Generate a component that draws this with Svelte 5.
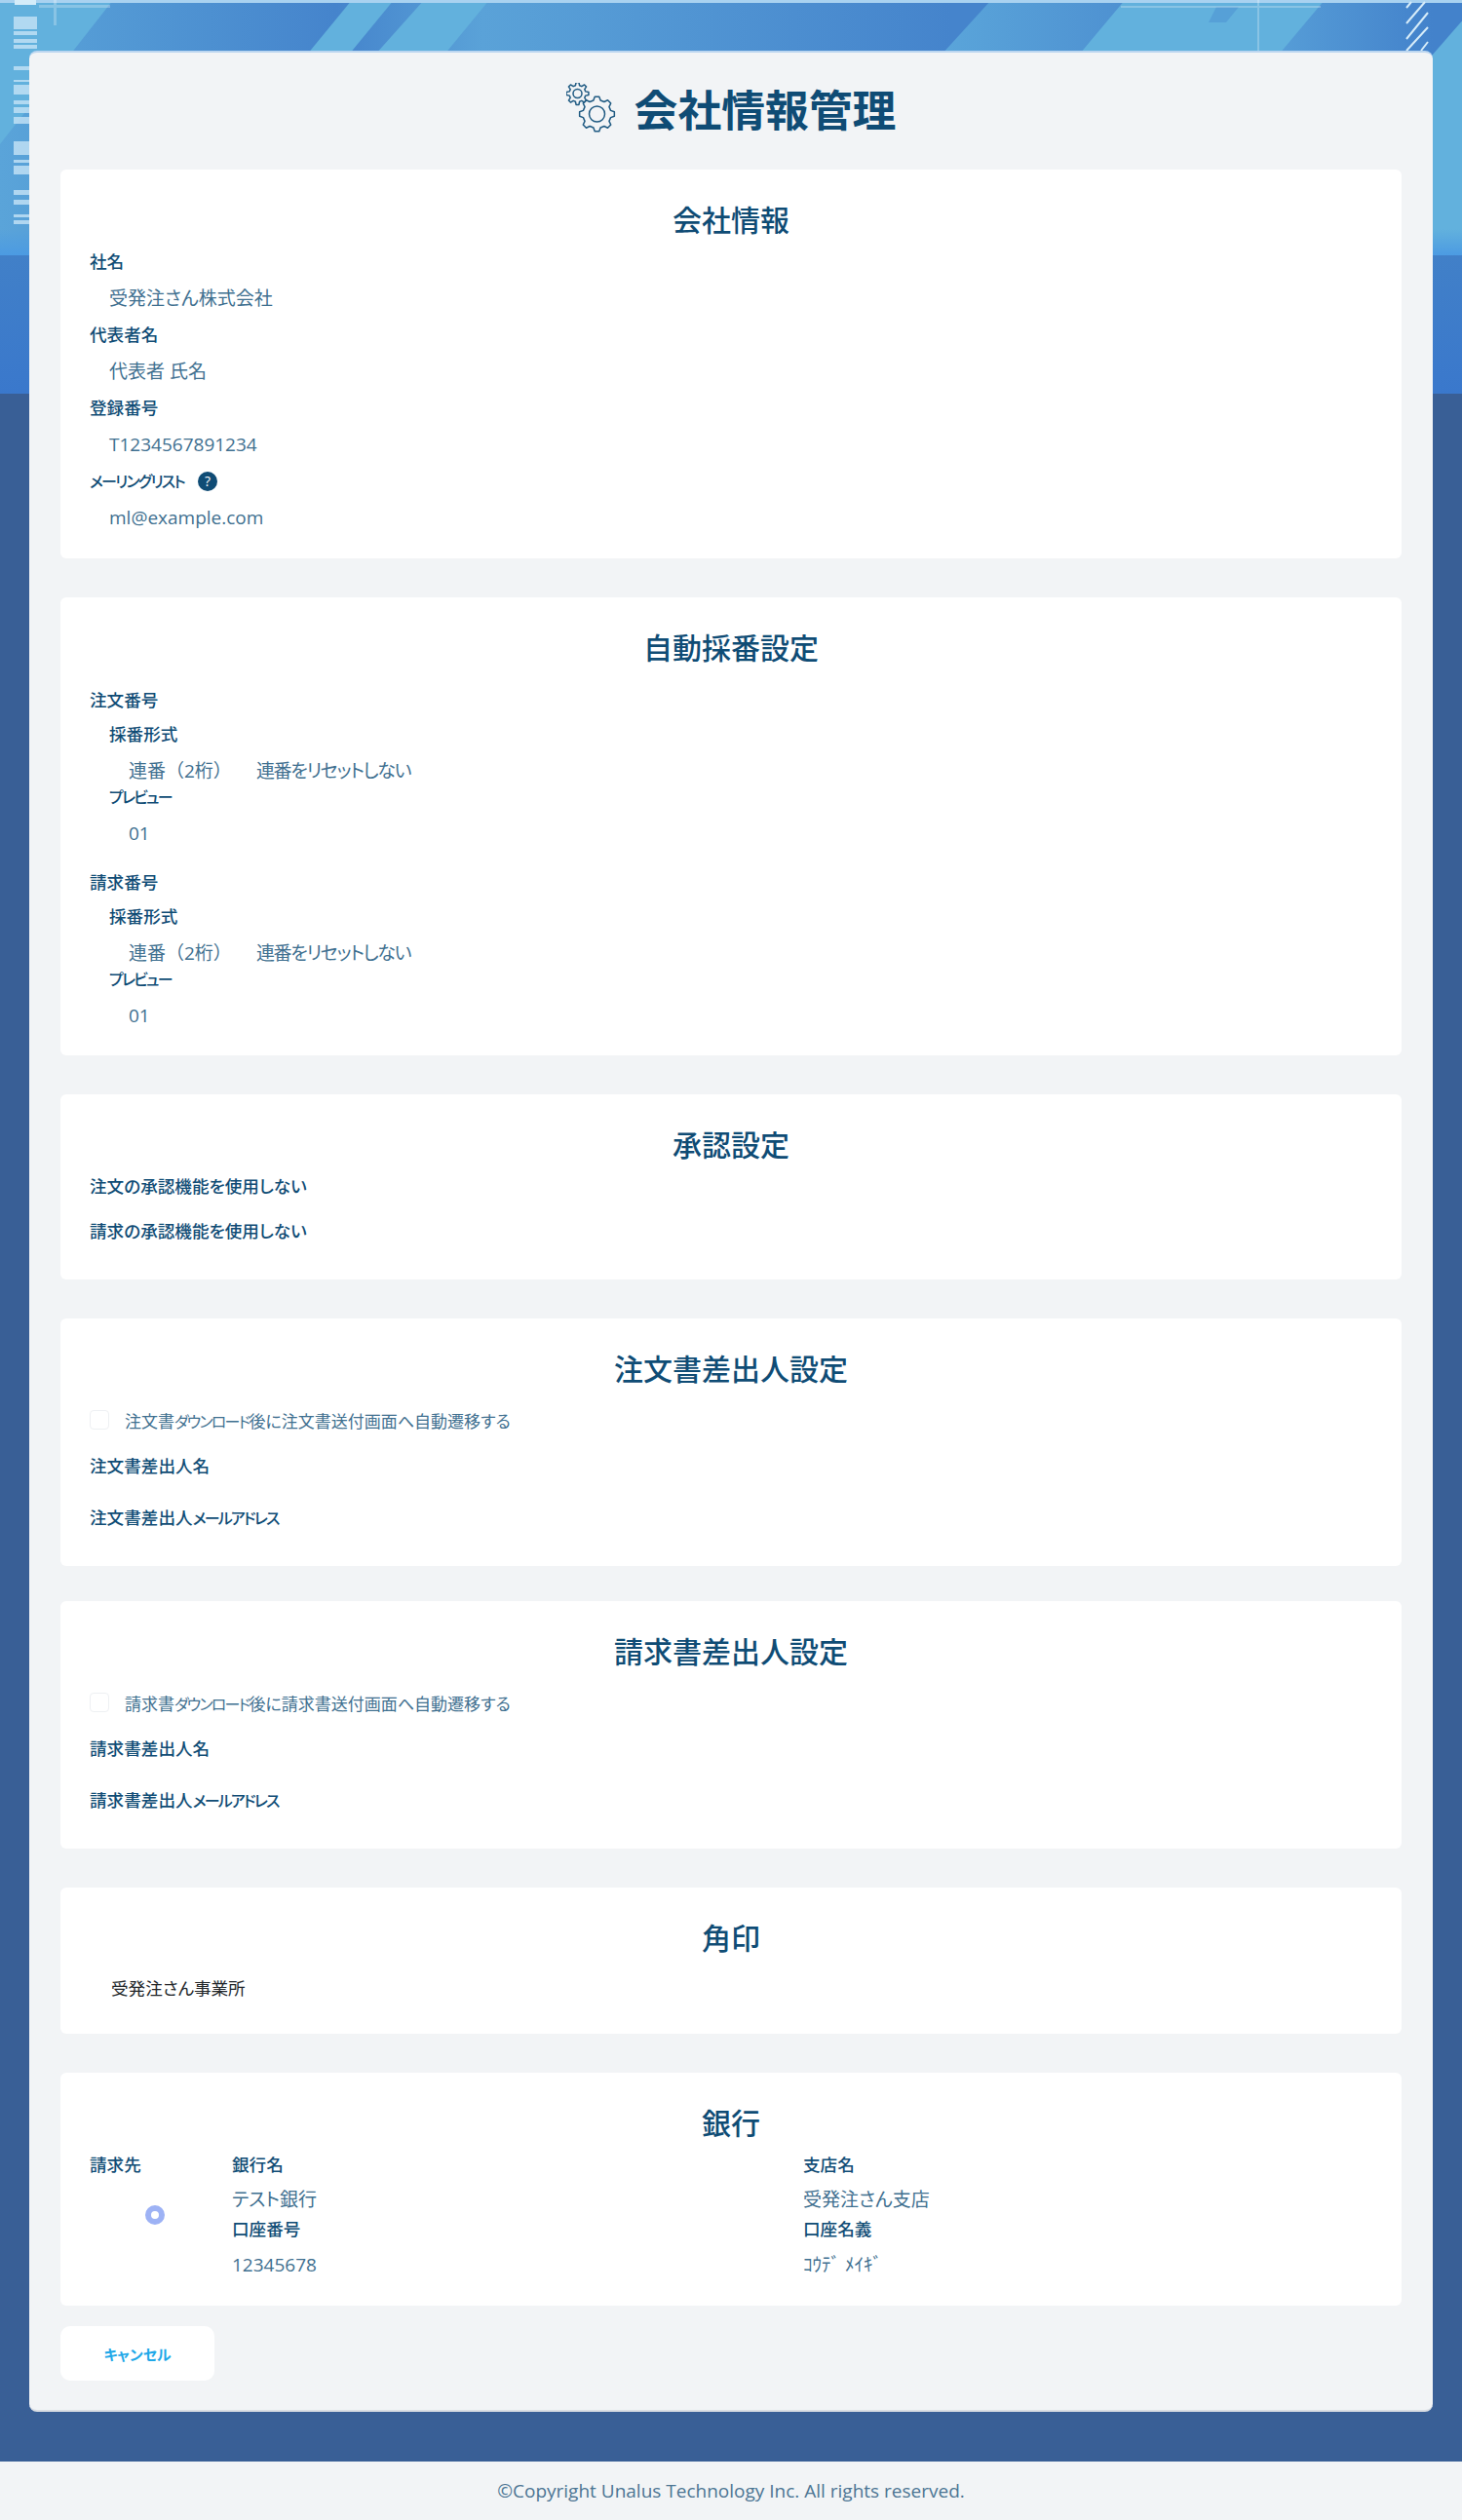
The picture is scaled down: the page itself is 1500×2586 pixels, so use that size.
<script>
	const gear = (cx, cy, outer, inner, teeth) => {
		const pts = [];
		const step = (Math.PI * 2) / teeth;
		for (let i = 0; i < teeth; i++) {
			const a = i * step;
			const corners = [
				[inner, a - step * 0.32],
				[outer, a - step * 0.16],
				[outer, a + step * 0.16],
				[inner, a + step * 0.32]
			];
			for (const [r, t] of corners) {
				pts.push(`${(cx + r * Math.cos(t)).toFixed(2)} ${(cy + r * Math.sin(t)).toFixed(2)}`);
			}
		}
		return 'M' + pts.join('L') + 'Z';
	};

	// the katakana runs sit smaller and tighter than the kanji around them
	const runs = (text) => text.split(/([ァ-ヶー]+)/).filter(Boolean);
	const isKana = (part) => /^[ァ-ヶー]/.test(part);

	const senders = [
		{ title: '注文書差出人設定', check: '注文書ダウンロード後に注文書送付画面へ自動遷移する', name: '注文書差出人名', mail: '注文書差出人メールアドレス' },
		{ title: '請求書差出人設定', check: '請求書ダウンロード後に請求書送付画面へ自動遷移する', name: '請求書差出人名', mail: '請求書差出人メールアドレス' }
	];
	const numbering = ['注文番号', '請求番号'];
	const leftBlocks = [
		[17, 13], [32, 4], [40, 4], [46, 4], [68, 4], [82, 2], [87, 10], [103, 4], [110, 6], [120, 7],
		[145, 14], [164, 3], [170, 9], [195, 5], [205, 5], [220, 3], [226, 4]
	];
</script>

{#snippet tight(text)}
	{#each runs(text) as part}{#if isKana(part)}<span class="kana">{part}</span>{:else}{part}{/if}{/each}
{/snippet}

<div class="page">
	<svg class="bg" viewBox="0 0 1500 262" width="1500" height="262" aria-hidden="true">
		<defs>
			<linearGradient id="base" x1="0" x2="1" y1="0" y2="0">
				<stop offset="0" stop-color="#5aa4d9" />
				<stop offset="0.23" stop-color="#4584cc" />
				<stop offset="0.33" stop-color="#5aa2d8" />
				<stop offset="0.65" stop-color="#4584cc" />
				<stop offset="0.86" stop-color="#4584cc" />
				<stop offset="0.875" stop-color="#569dd7" />
				<stop offset="0.98" stop-color="#4382cb" />
			</linearGradient>
			<linearGradient id="mid" x1="0" x2="1" y1="0" y2="0">
				<stop offset="0" stop-color="#5aa5da" />
				<stop offset="1" stop-color="#4e91d1" />
			</linearGradient>
			<linearGradient id="fade" x1="0" x2="0" y1="0" y2="1">
				<stop offset="0" stop-color="#4c9be2" stop-opacity="0" />
				<stop offset="1" stop-color="#4c9be2" />
			</linearGradient>
		</defs>
		<rect width="1500" height="262" fill="url(#base)" />
		<path d="M0 0H116L0 148Z" fill="#62b1dd" />
		<path d="M361 0H404L358 56H315Z" fill="#62b1dd" />
		<path d="M435 0H502L456 56H385Z" fill="#62b1dd" />
		<path d="M1017 0H1154L1107 56H966Z" fill="url(#mid)" />
		<path d="M1154 0H1359L1312 56H1107Z" fill="#62b1dd" />
		<path d="M1248 7H1271L1258 23H1240Z" fill="#4f94d3" opacity="0.6" />
		<path d="M1510 10L1290 262H1500Z" fill="#62b1dd" />
		<rect y="235" width="1500" height="27" fill="url(#fade)" />
		<rect width="1500" height="3" fill="#a9d2f0" />
		{#each leftBlocks as [y, h]}
			<rect x="14" {y} width="24" height={h} fill="#c6e4f6" opacity="0.8" />
		{/each}
		<rect x="15" y="0" width="22" height="5" fill="#d4ecf9" />
		<g fill="#ffffff" opacity="0.25">
			<rect x="55" y="0" width="3" height="26" />
			<rect x="40" y="5" width="73" height="3" />
			<rect x="1290" y="0" width="2" height="52" />
			<rect x="1150" y="6" width="205" height="2" />
		</g>
		<g stroke="#d6ecf9" stroke-width="2">
			<path d="M1443 8L1448 2M1443 24L1462 2M1443 40L1465 13M1443 52L1465 28M1458 52L1465 43" />
		</g>
	</svg>

	<main class="panel">
		<h1 class="page-title">
			<svg class="gears" viewBox="0 0 56 56" width="56" height="56" aria-hidden="true">
				<path d={gear(11.5, 11, 11.5, 8.5, 8)} />
				<circle cx="11.5" cy="11" r="4.5" />
				<path d={gear(31.5, 32, 18, 14.5, 8)} />
				<circle cx="31.5" cy="32" r="8" />
			</svg>
			<span>会社情報管理</span>
		</h1>

		<section class="card company">
			<h2>会社情報</h2>
			<div class="label">社名</div>
			<div class="value">受発注さん株式会社</div>
			<div class="label">代表者名</div>
			<div class="value">代表者 氏名</div>
			<div class="label">登録番号</div>
			<div class="value">T1234567891234</div>
			<div class="label">{@render tight('メーリングリスト')}<span class="help">?</span></div>
			<div class="value">ml@example.com</div>
		</section>

		<section class="card numbering">
			<h2>自動採番設定</h2>
			{#each numbering as name}
				<div class="group">
					<div class="label">{name}</div>
					<div class="label sub">採番形式</div>
					<div class="value deep format"><span class="full">連番（2桁）</span><span class="reset">連番をリセットしない</span></div>
					<div class="label sub preview">{@render tight('プレビュー')}</div>
					<div class="value deep">01</div>
				</div>
			{/each}
		</section>

		<section class="card approval">
			<h2>承認設定</h2>
			<div class="label">注文の承認機能を使用しない</div>
			<div class="label">請求の承認機能を使用しない</div>
		</section>

		{#each senders as s}
			<section class="card sender">
				<h2>{s.title}</h2>
				<label class="check"><span class="box"></span><span>{@render tight(s.check)}</span></label>
				<div class="label">{s.name}</div>
				<div class="label">{@render tight(s.mail)}</div>
			</section>
		{/each}

		<section class="card seal">
			<h2>角印</h2>
			<div class="seal-name">受発注さん事業所</div>
		</section>

		<section class="card bank">
			<h2>銀行</h2>
			<div class="bank-grid">
				<div class="payee">
					<div class="label">請求先</div>
					<span class="radio"></span>
				</div>
				<div class="bank-fields">
					<div>
						<div class="label">銀行名</div>
						<div class="bank-value">テスト銀行</div>
					</div>
					<div>
						<div class="label">支店名</div>
						<div class="bank-value">受発注さん支店</div>
					</div>
					<div>
						<div class="label">口座番号</div>
						<div class="bank-value lower">12345678</div>
					</div>
					<div>
						<div class="label">口座名義</div>
						<div class="bank-value lower">ｺｳﾃﾞ ﾒｲｷﾞ</div>
					</div>
				</div>
			</div>
		</section>

		<button class="cancel" type="button">キャンセル</button>
	</main>

	<footer>©Copyright Unalus Technology Inc. All rights reserved.</footer>
</div>

<style>
	:global(body) {
		margin: 0;
		background: #395f96;
	}
	.page {
		position: relative;
		min-height: 2586px;
		display: flex;
		flex-direction: column;
		background: linear-gradient(#4180c8, #3a78cc) 0 262px / 100% 142px no-repeat, #395f96;
		font-family: 'Open Sans', 'Noto Sans CJK JP', sans-serif;
		font-feature-settings: 'palt';
		color: #0f4c75;
	}
	.bg {
		position: absolute;
		top: 0;
		left: 0;
		display: block;
	}
	.panel {
		position: relative;
		box-sizing: border-box;
		width: 1440px;
		margin: 52px auto 50px;
		padding: 0 32px 30px;
		background: #f2f4f6;
		border-radius: 8px;
		border-top: 2px solid #bcd6f0;
		border-bottom: 2px solid #d9dde3;
	}
	.page-title {
		display: flex;
		align-items: center;
		justify-content: center;
		gap: 14px;
		height: 118px;
		margin: 0 0 2px;
		font-size: 44.8px;
		font-weight: 700;
		line-height: 1;
	}
	.gears path,
	.gears circle {
		fill: none;
		stroke: #1f5a82;
		stroke-width: 1.5;
		stroke-linejoin: round;
	}
	.card {
		background: #fff;
		border-radius: 6px;
		padding: 32px 30px 18px;
		margin-bottom: 40px;
	}
	.card h2 {
		margin: 0 0 9px;
		font-size: 30px;
		line-height: 40px;
		font-weight: 500;
		text-align: center;
	}
	.label {
		font-size: 17.6px;
		line-height: 26px;
		font-weight: 500;
	}
	.kana {
		font-size: 16px;
		line-height: 1;
		letter-spacing: -1.8px;
	}
	.value {
		padding: 12px 0 11px 20px;
		font-size: 19px;
		line-height: 26px;
		color: #3f7090;
	}
	.help {
		display: inline-block;
		width: 20px;
		height: 20px;
		margin-left: 14px;
		border-radius: 50%;
		background: #0f4c75;
		color: #fff;
		font-size: 14px;
		line-height: 20px;
		text-align: center;
		vertical-align: 1px;
	}
	.numbering {
		padding-bottom: 28px;
	}
	.numbering h2 {
		margin-bottom: 20px;
	}
	.group + .group {
		margin-top: 24px;
	}
	.sub {
		padding: 9px 0 0 20px;
	}
	.sub.preview {
		padding-top: 0;
	}
	.value.deep {
		padding: 12px 0 0 40px;
	}
	.format {
		display: flex;
		gap: 25px;
	}
	.full {
		font-feature-settings: normal;
	}
	.reset {
		letter-spacing: -1.3px;
	}
	.approval {
		padding-bottom: 37px;
	}
	.approval .label + .label {
		margin-top: 20px;
	}
	.sender {
		padding-bottom: 37px;
	}
	.sender:has(+ .sender) {
		margin-bottom: 36px;
	}
	.check {
		display: flex;
		align-items: center;
		gap: 16px;
		height: 20px;
		margin: 22px 0 24px;
		font-size: 17px;
		color: #3f7090;
	}
	.box {
		box-sizing: border-box;
		width: 20px;
		height: 20px;
		border: 1px solid #eef0f3;
		border-radius: 4px;
	}
	.sender .check + .label + .label {
		margin-top: 27px;
	}
	.seal-name {
		margin: 18px 0 0 22px;
		font-size: 17.6px;
		line-height: 26px;
		color: #212529;
	}
	.seal {
		padding-bottom: 34px;
	}
	.bank {
		padding-bottom: 29px;
	}
	.bank-grid {
		display: grid;
		grid-template-columns: 146px 1fr;
	}
	.payee {
		display: flex;
		flex-direction: column;
	}
	.radio {
		box-sizing: border-box;
		width: 20px;
		height: 20px;
		margin: 29px 0 0 57px;
		border: 6px solid #9db2f5;
		border-radius: 50%;
		background: #fff;
	}
	.bank-fields {
		display: grid;
		grid-template-columns: 586px 1fr;
		row-gap: 4px;
	}
	.bank-value {
		margin-top: 10px;
		font-size: 19px;
		line-height: 26px;
		color: #3f7090;
	}
	.bank-value.lower {
		margin-top: 11px;
	}
	.cancel {
		display: block;
		width: 158px;
		height: 56px;
		margin-top: -19px;
		border: none;
		border-radius: 10px;
		background: #fff;
		color: #1fa8e8;
		font: inherit;
		font-size: 15px;
		font-weight: 700;
	}
	footer {
		position: relative;
		height: 60px;
		margin-top: auto;
		background: #f2f4f6;
		color: #4c7593;
		font-size: 19px;
		line-height: 60px;
		text-align: center;
	}
</style>
